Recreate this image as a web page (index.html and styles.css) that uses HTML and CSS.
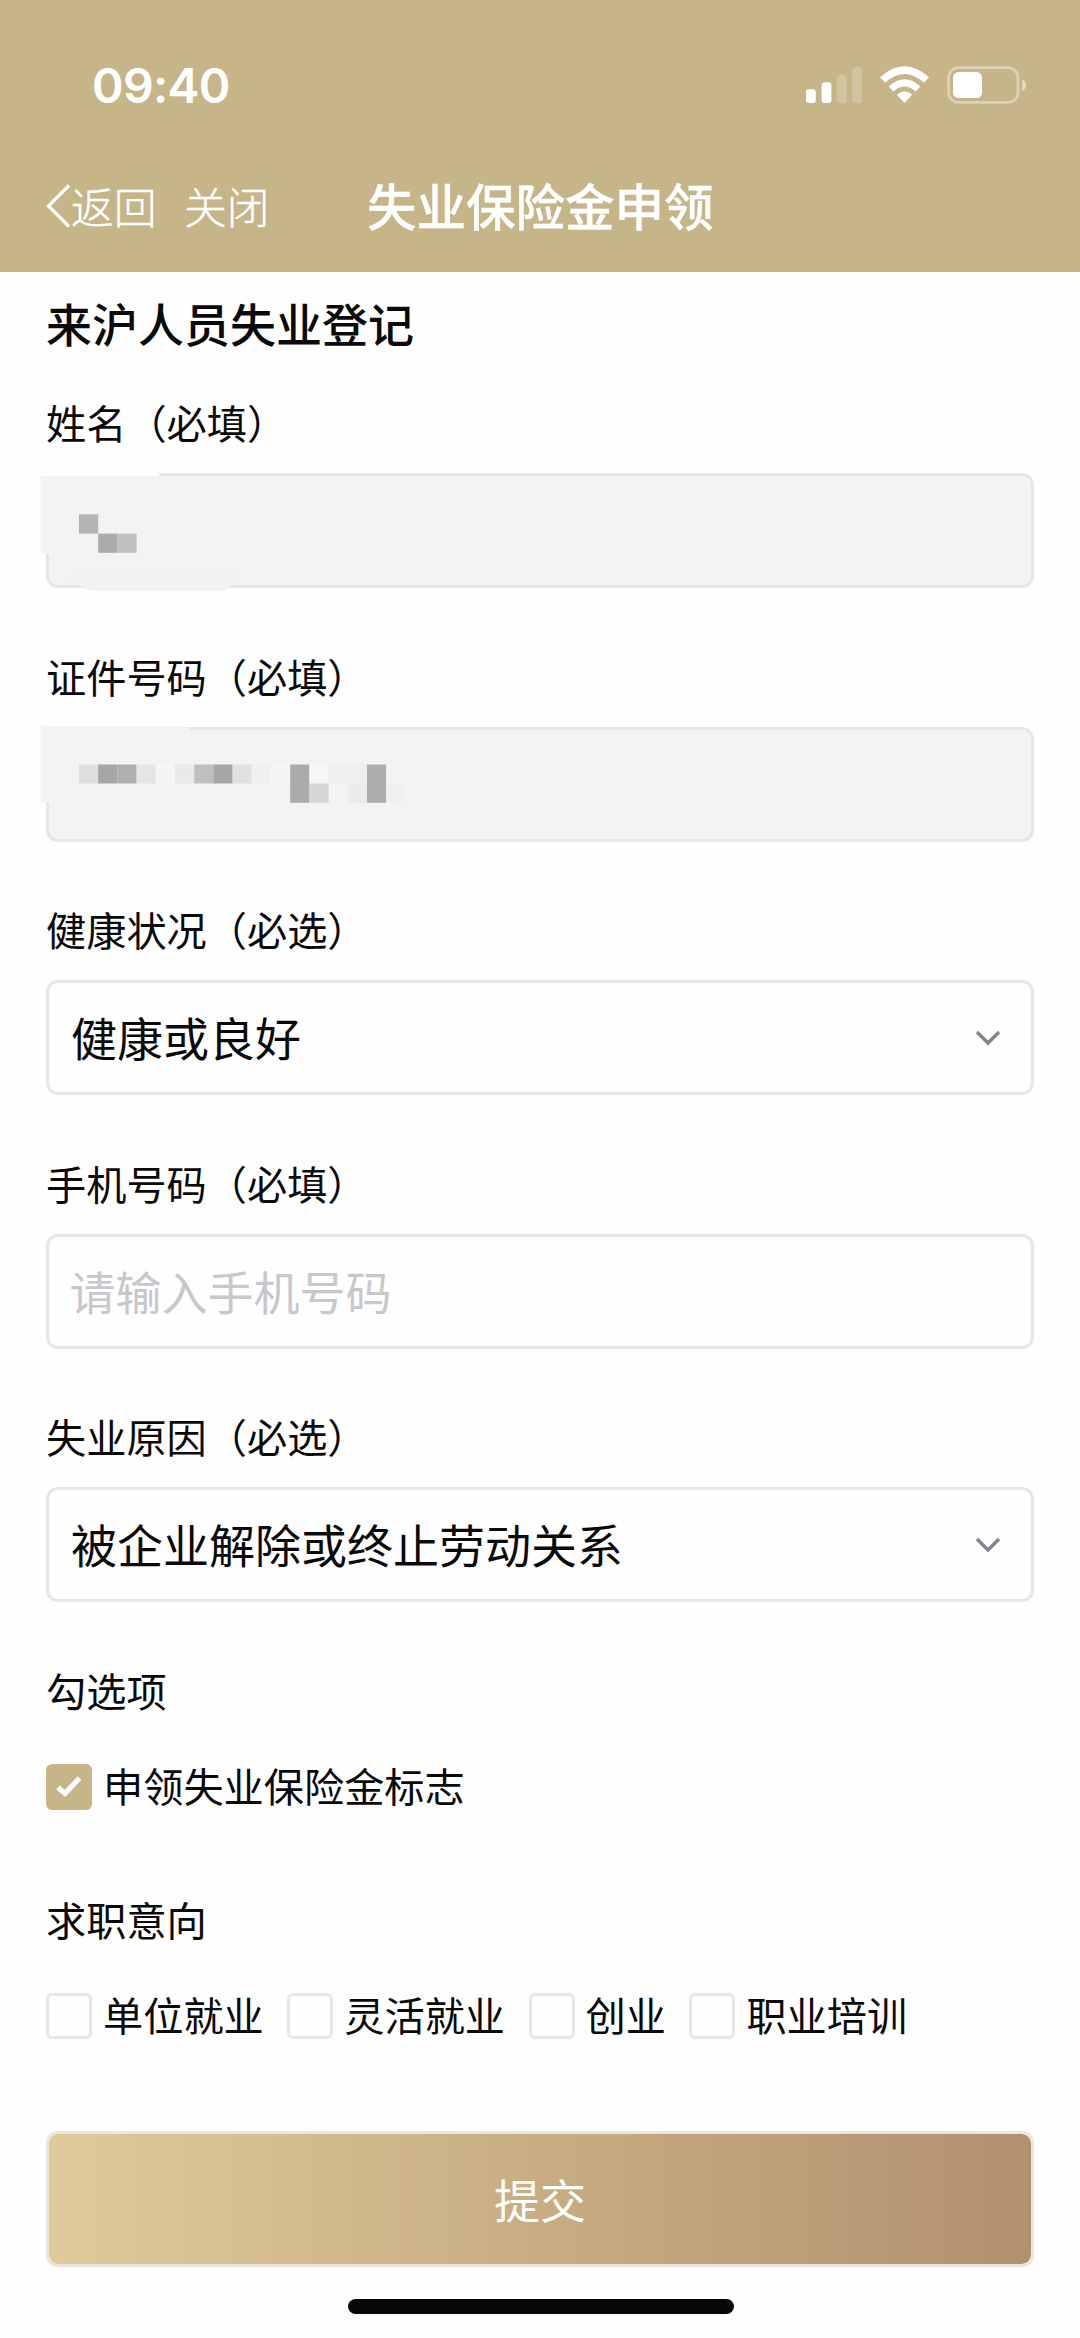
FILE: index.html
```html
<!DOCTYPE html>
<html lang="zh-CN">
<head>
<meta charset="utf-8">
<title>失业保险金申领</title>
<link rel="stylesheet" href="styles.css">
</head>
<body>
<header class="header">
  <div class="status">
    <span class="clock">09:40</span>
    <svg class="status-icons" width="222" height="40" viewBox="0 0 222 40">
      <g fill="#fff">
        <rect x="1" y="24.3" width="9.8" height="13.7" rx="3"/>
        <rect x="16.6" y="17.3" width="9.8" height="20.7" rx="3"/>
        <rect x="31.8" y="9.7" width="9.8" height="28.3" rx="3" opacity=".2"/>
        <rect x="47.2" y="2" width="9.8" height="36" rx="3" opacity=".2"/>
        <path d="M99.500 38 L92.600 30.600 Q92 29.600 93 28.800 Q99.500 24.400 106 28.800 Q107 29.600 106.400 30.600 Z"/>
      </g>
      <g fill="none" stroke="#fff">
        <path d="M77.500 15 Q99.500 -4.800 121.500 15" stroke-width="7.500"/>
        <path d="M86 24 Q99.500 11.800 113 24" stroke-width="7"/>
        <rect x="143.600" y="2.600" width="69.400" height="34.800" rx="10" stroke-width="2.700" opacity=".4"/>
      </g>
      <rect x="148" y="7" width="29" height="26" rx="5.500" fill="#fff"/>
      <path d="M217 14.500 Q221.200 16.500 221.200 20.200 T217 26 Z" fill="#fff" opacity=".5"/>
    </svg>
  </div>
  <nav class="nav">
    <a class="back"><svg class="back-icon" width="25" height="44" viewBox="0 0 25 44"><path d="M23 1.500 L2.500 22 L23 42.500" fill="none" stroke="#fff" stroke-width="3.200"/></svg><span>返回</span></a>
    <a class="close">关闭</a>
    <h1 class="title">失业保险金申领</h1>
  </nav>
</header>
<main class="form">
  <h2 class="form-title">来沪人员失业登记</h2>

  <section class="field">
    <label class="label">姓名（必填）</label>
    <div class="control disabled">
      <svg class="mask" width="240" height="130" viewBox="36 468 240 130">
        <path d="M36 468 H155 L160 478 H52 V556 H36 Z" fill="#fefefe"/>
        <path d="M40.700 478 H100 V530 H60 V555.700 H40.700 Z" fill="#f4f4f4"/>
        <path d="M60 478 H160 V530 H60 Z" fill="#f3f3f3"/>
        <path d="M74 576 H240 L232 587 L224 592.700 H97 Q88 592.700 78 587 L70 583 Z" fill="#f2f2f2"/>
        <rect x="79" y="516.300" width="19.200" height="19.300" fill="#b4b4b4"/>
        <rect x="98.200" y="535.600" width="19.200" height="19.200" fill="#ababab"/>
        <rect x="117.400" y="535.600" width="19.200" height="19.200" fill="#c0c0c0"/>
      </svg>
    </div>
  </section>

  <section class="field">
    <label class="label">证件号码（必填）</label>
    <div class="control disabled">
      <svg class="mask" width="400" height="130" viewBox="36 721.500 400 130">
        <path d="M36 721.500 H165 L178 727.500 H52 V804 H36 Z" fill="#fefefe"/>
        <path d="M40.700 727.500 H60 V804 H40.700 Z" fill="#f4f4f4"/>
        <path d="M60 727.500 H178 L190 729.500 V745 H60 Z" fill="#f3f3f3"/>
        <g>
          <rect x="79" y="766" width="19.200" height="19" fill="#dedede"/>
          <rect x="98.200" y="766" width="19.200" height="19" fill="#a5a5a5"/>
          <rect x="117.400" y="766" width="19.200" height="19" fill="#afafaf"/>
          <rect x="136.600" y="766" width="19.200" height="19" fill="#e5e5e5"/>
          <rect x="155.800" y="766" width="19.200" height="19" fill="#f5f5f5"/>
          <rect x="175" y="766" width="19.200" height="19" fill="#e9e9e9"/>
          <rect x="194.200" y="766" width="19.200" height="19" fill="#bfbfbf"/>
          <rect x="213.400" y="766" width="19.200" height="19" fill="#a6a6a6"/>
          <rect x="232.600" y="766" width="19.200" height="19" fill="#e1e1e1"/>
          <rect x="251.800" y="766" width="19.200" height="19" fill="#f0f0f0"/>
          <rect x="271" y="766" width="19.200" height="19" fill="#f5f5f5"/>
          <rect x="290.200" y="766" width="19.200" height="38.300" fill="#ababab"/>
          <rect x="309.400" y="766" width="19.200" height="19" fill="#f6f6f6"/>
          <rect x="309.400" y="785" width="19.200" height="19.300" fill="#d6d6d6"/>
          <rect x="328.600" y="766" width="38.400" height="19" fill="#efefef"/>
          <rect x="347.800" y="785" width="19.200" height="19.300" fill="#ebebeb"/>
          <rect x="367" y="766" width="19.200" height="38.300" fill="#adadad"/>
          <rect x="386.200" y="766" width="19.200" height="19" fill="#f4f4f4"/>
          <rect x="386.200" y="785" width="19.200" height="19.300" fill="#f0f0f0"/>
        </g>
      </svg>
    </div>
  </section>

  <section class="field">
    <label class="label">健康状况（必选）</label>
    <div class="control"><span class="value">健康或良好</span>
      <svg class="arrow" width="26" height="18" viewBox="0 0 26 18"><path d="M2 3 L13 14 L24 3" fill="none" stroke="#81858f" stroke-width="3.400"/></svg></div>
  </section>

  <section class="field">
    <label class="label">手机号码（必填）</label>
    <div class="control"><span class="value placeholder">请输入手机号码</span></div>
  </section>

  <section class="field">
    <label class="label">失业原因（必选）</label>
    <div class="control"><span class="value">被企业解除或终止劳动关系</span>
      <svg class="arrow" width="26" height="18" viewBox="0 0 26 18"><path d="M2 3 L13 14 L24 3" fill="none" stroke="#81858f" stroke-width="3.400"/></svg></div>
  </section>

  <section class="group group-claim">
    <p class="label">勾选项</p>
    <div class="options">
      <label class="option"><span class="box checked"><svg width="46" height="46" viewBox="0 0 46 46"><path d="M12 23.500 L19 29.500 L33.500 14" fill="none" stroke="#fff" stroke-width="5.200"/></svg></span>申领失业保险金标志</label>
    </div>
  </section>

  <section class="group">
    <p class="label">求职意向</p>
    <div class="options">
      <label class="option"><span class="box"></span>单位就业</label>
      <label class="option"><span class="box"></span>灵活就业</label>
      <label class="option"><span class="box"></span>创业</label>
      <label class="option"><span class="box"></span>职业培训</label>
    </div>
  </section>

  <button class="submit" type="button">提交</button>
</main>
<div class="home-bar"></div>
</body>
</html>
```

FILE: styles.css
```css
* {
  box-sizing: border-box;
}

body {
  margin: 0;
  width: 1080px;
  height: 2338px;
  display: flex;
  flex-direction: column;
  overflow: hidden;
  background: #fefefe;
  color: #0a0a0a;
  font-family: "Noto Sans CJK SC", sans-serif;
  font-size: 40.200px;
}

.header {
  height: 272px;
  flex: none;
  background: #c7b58a;
  border-bottom: 1px solid #bcb297;
  color: #fff;
}

.status {
  height: 141px;
  padding: 65px 53px 0 92px;
  display: flex;
  justify-content: space-between;
  align-items: flex-start;
}

.clock {
  font-family: Inter, sans-serif;
  font-weight: 600;
  font-size: 48px;
  line-height: 42px;
  letter-spacing: -0.700px;
}

.nav {
  height: 130px;
  display: grid;
  grid-template-columns: 138px 183px 1fr;
  align-items: center;
  padding-left: 46px;
  font-size: 42.800px;
  font-weight: 300;
  line-height: 60px;
}

.back {
  display: flex;
  align-items: center;
}

.back span,
.close {
  padding-bottom: 3px;
  -webkit-text-stroke: 0.400px #fff;
}

.back-icon {
  flex: none;
}

.title {
  margin: 0;
  padding-bottom: 2px;
  font-size: 49.500px;
  font-weight: 500;
  -webkit-text-stroke: 0.400px #fff;
}

.form {
  flex: none;
  padding: 18px 46px 0;
}

.form-title {
  margin: 0 0 40px;
  font-size: 46px;
  font-weight: 500;
  line-height: 64px;
}

.field {
  height: 253.500px;
}

.label {
  display: block;
  margin: 0 0 23px;
  line-height: 56px;
}

.control {
  position: relative;
  height: 115px;
  padding: 0 30px 0 22px;
  display: flex;
  align-items: center;
  justify-content: space-between;
  border: 3px solid #e6e6e6;
  border-radius: 12px;
  font-size: 46px;
}

.disabled {
  background: #f3f3f3;
}

.mask {
  position: absolute;
  left: -13px;
  top: -10px;
}

.value {
  padding-bottom: 3px;
  line-height: 66px;
}

.placeholder {
  margin-left: -1.500px;
  color: #c7c7cc;
}

.group-claim {
  height: 229px;
}

.options {
  display: flex;
  gap: 23.500px;
  margin-top: 39.500px;
}

.group .label {
  margin-bottom: 0;
}

.option {
  display: flex;
  align-items: center;
  gap: 11px;
  line-height: 56px;
}

.box {
  width: 46px;
  height: 46px;
  flex: none;
  margin-top: 4px;
  border: 3px solid #e6e6e6;
  border-radius: 6px;
}

.checked {
  border: 0;
  background: #c7b58a;
}

.checked svg {
  display: block;
}

.submit {
  display: block;
  width: 100%;
  height: 136px;
  margin-top: 88.500px;
  padding: 0 0 2px;
  border: 3px solid #ece5db;
  border-radius: 12px;
  background: linear-gradient(90deg, #dfca99, #c8ad83 50%, #b1906f) padding-box;
  color: #fff;
  font-family: inherit;
  font-size: 46px;
}

.home-bar {
  width: 386px;
  height: 15px;
  margin: 32px 0 0 348px;
  flex: none;
  border-radius: 8px;
  background: #080808;
}
```
